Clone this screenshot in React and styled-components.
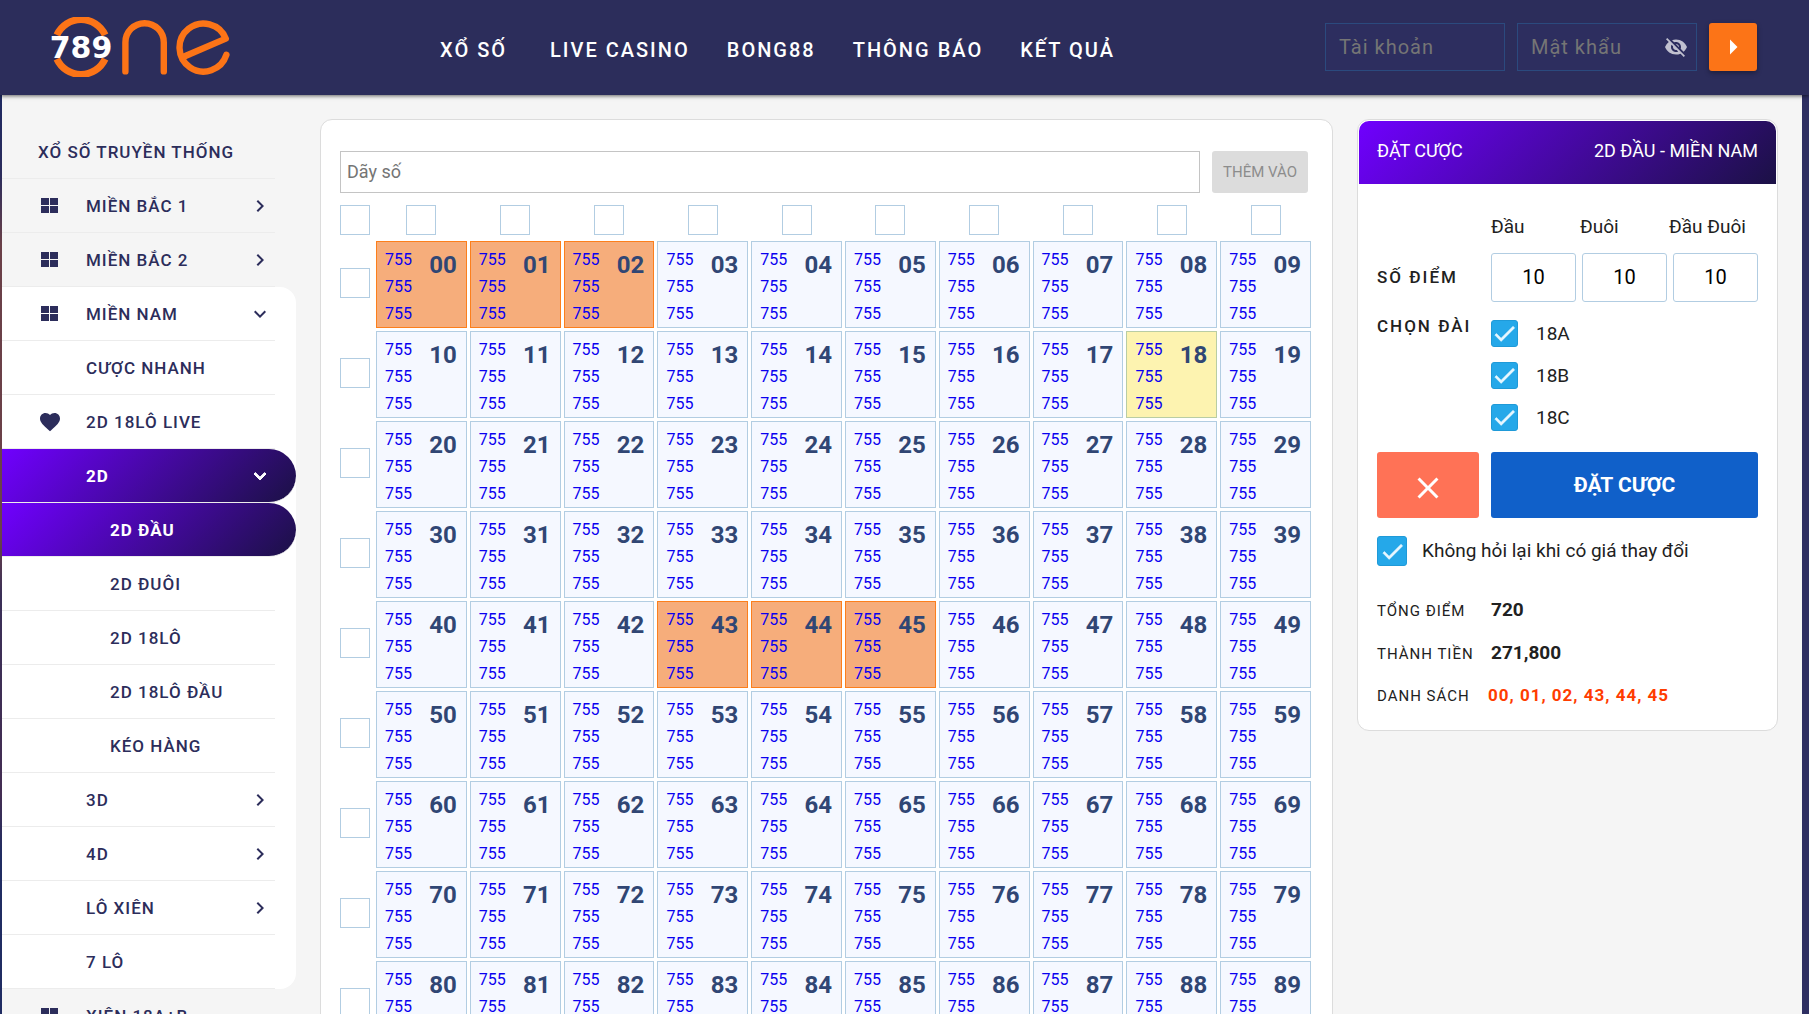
import React, { useState } from "react";
import styled, { createGlobalStyle, css } from "styled-components";
import {
  MdVisibilityOff,
  MdArrowRight,
  MdChevronRight,
  MdKeyboardArrowDown,
  MdFavorite,
  MdCheck,
  MdClose,
} from "react-icons/md";

const GlobalStyle = createGlobalStyle`
  *, *::before, *::after { box-sizing: border-box; }
  body {
    margin: 0;
    background: #2c2d5b;
    font-family: Roboto, "Liberation Sans", sans-serif;
    color: #212121;
  }
  button, input { font-family: inherit; }
`;

const colors = {
  navy: "#2c2d5b",
  orange: "#fc7417",
  line: "#b2cde2",
  edge: "#dcdcdc",
  check: "#25a8e9",
};

const accentGradient = "linear-gradient(135deg, #7000ff 0%, #1b1145 100%)";

const Page = styled.div`
  display: flex;
  flex-direction: column;
  height: 100vh;
  overflow: hidden;
`;

/* ---------- header ---------- */

const Header = styled.header`
  position: relative;
  z-index: 1;
  display: flex;
  align-items: center;
  flex: none;
  height: 95px;
  padding: 0 52px 1px 47px;
  background: ${colors.navy};
  box-shadow: 0 1px 4px rgba(0, 0, 0, 0.6);
`;

const LogoLink = styled.a`
  display: block;
  height: 60px;
`;

const Nav = styled.nav`
  display: flex;
  gap: 37px;
  margin-left: 209px;
  padding-top: 5px;
`;

const NavLink = styled.a`
  padding-right: ${(p) => (p.$wide ? 6 : 0)}px;
  color: #fff;
  font-size: 20px;
  font-weight: 500;
  line-height: 24px;
  letter-spacing: 2px;
  text-decoration: none;
  white-space: nowrap;
`;

const Login = styled.form`
  display: flex;
  gap: 12px;
  margin-left: auto;
`;

const LoginField = styled.div`
  display: flex;
  align-items: center;
  width: 180px;
  height: 48px;
  padding: 0 8px 0 13px;
  border: 1px solid #2b4a7e;
  background: #2d2e5f;
`;

const LoginInput = styled.input`
  flex: 1;
  min-width: 0;
  padding: 0;
  border: 0;
  outline: 0;
  background: none;
  color: #fff;
  font-size: 20px;
  letter-spacing: 1px;
  &::placeholder { color: #757575; opacity: 1; }
`;

const EyeButton = styled.button`
  display: flex;
  padding: 0;
  border: 0;
  background: none;
  color: #c1c1d0;
  font-size: 24px;
`;

const LoginButton = styled.button`
  display: flex;
  align-items: center;
  justify-content: center;
  width: 48px;
  height: 48px;
  padding: 0;
  border: 0;
  border-radius: 3px;
  background: ${colors.orange};
  color: #fff;
  font-size: 36px;
  box-shadow: 0 2px 5px rgba(0, 0, 0, 0.35);
`;

/* ---------- body layout ---------- */

const Backdrop = styled.div`
  flex: 1;
  min-height: 0;
  padding: 0 7px 0 2px;
  background:
    linear-gradient(#1f2a62 0, #2b2c5c 80px, #6a4048 150px, #6b4149 440px, #3a2f57 500px, #432d52 700px, #202c62 760px)
      left / 2px 100% no-repeat,
    #2e2f62;
`;

const Body = styled.main`
  display: grid;
  grid-template-columns: 294px minmax(0, 1fr) 421px;
  column-gap: 24px;
  align-items: start;
  min-height: 100%;
  padding-right: 24px;
  background: #f5f5f5;
`;

/* ---------- side menu ---------- */

const Side = styled.nav`
  padding-top: 30px;
`;

const SideGroup = styled.div`
  border-radius: 0 16px 16px 0;
  background: ${(p) => (p.$open ? "#fff" : "none")};
`;

const SideRow = styled.a`
  display: flex;
  align-items: center;
  height: 54px;
  margin-right: 21px;
  padding: 1px 3px 0 ${(p) => p.$indent}px;
  border-bottom: 1px solid #ececec;
  color: ${colors.navy};
  font-size: 17px;
  font-weight: 500;
  letter-spacing: 1px;
  line-height: 20px;
  text-decoration: none;
  white-space: nowrap;
  ${(p) =>
    p.$active &&
    css`
      margin-right: 0;
      padding-right: 24px;
      border-radius: 0 27px 27px 0;
      background: ${accentGradient};
      color: #fff;
      font-weight: 700;
    `}
`;

const RowIcon = styled.span`
  display: flex;
  width: 48px;
  font-size: 24px;
`;

const RowLabel = styled.span`
  flex: 1;
`;

const RowChevron = styled.span`
  display: flex;
  font-size: 24px;
  path:not([fill="none"]) {
    stroke: currentColor;
    stroke-width: ${(p) => (p.$bold ? 1 : 0)};
  }
`;

/* ---------- number board ---------- */

const Card = styled.section`
  margin-top: 24px;
  border: 1px solid ${colors.edge};
  border-radius: 12px;
  background: #fff;
`;

const Board = styled(Card)`
  padding: 31px 21px 24px 19px;
`;

const AddBar = styled.form`
  display: flex;
  gap: 12px;
  padding-right: 3px;
`;

const SeriesInput = styled.input`
  flex: 1;
  min-width: 0;
  height: 42px;
  padding: 0 6px 2px;
  border: 1px solid #c4c4c4;
  outline: 0;
  color: #212121;
  font-size: 18px;
  &::placeholder { color: #757575; opacity: 1; }
`;

const AddButton = styled.button`
  width: 96px;
  height: 42px;
  padding: 0;
  border: 0;
  border-radius: 3px;
  background: #dcdcdc;
  color: #8c8c8c;
  font-size: 15px;
  white-space: nowrap;
`;

const BoardGrid = styled.div`
  display: grid;
  grid-template-columns: 30px minmax(0, 1fr);
  column-gap: 6px;
  row-gap: 3px;
  margin-top: 12px;
`;

const PickHead = styled.div`
  display: grid;
  grid-template-columns: repeat(10, minmax(0, 1fr));
  column-gap: 3px;
  justify-items: center;
  height: 33px;
`;

const PickBox = styled.input`
  appearance: none;
  display: block;
  width: 30px;
  height: 30px;
  margin: 0;
  border: 1px solid ${colors.line};
  background: #fff;
`;

const PickRow = styled.div`
  padding-top: ${(p) => (p.$head ? 0 : 27)}px;
`;

const NumberRow = styled.div`
  display: grid;
  grid-template-columns: repeat(10, minmax(0, 1fr));
  column-gap: 3px;
`;

const tones = {
  plain: css`
    border-color: ${colors.line};
    background: #f5f8ff;
  `,
  picked: css`
    border-color: #fc7f1c;
    background: #f6ad7b;
  `,
  hover: css`
    border-color: #b9cda4;
    background: #fdf3b0;
  `,
};

const NumberCell = styled.button`
  display: flex;
  align-items: flex-start;
  justify-content: space-between;
  height: 87px;
  padding: 8px 9px 2px 8px;
  border: 1px solid;
  ${(p) => tones[p.$tone]}
`;

const Odds = styled.span`
  display: flex;
  flex-direction: column;
  justify-content: space-between;
  height: 74px;
  color: #0a00f0;
  font-size: 16px;
  line-height: 20px;
`;

const NumberLabel = styled.span`
  padding-top: 1px;
  color: #304674;
  font-size: 24px;
  font-weight: 700;
  line-height: 28px;
`;

/* ---------- bet slip ---------- */

const Slip = styled(Card)`
  padding: 1px;
`;

const SlipHead = styled.h2`
  display: flex;
  align-items: center;
  justify-content: space-between;
  height: 63px;
  margin: 0;
  padding: 0 18px 4px;
  border-radius: 10px 10px 0 0;
  background: ${accentGradient};
  color: #fff;
  font-size: 18px;
  font-weight: 400;
`;

const SlipBody = styled.form`
  display: grid;
  grid-template-columns: 102px minmax(0, 1fr);
  column-gap: 12px;
  padding: 31px 18px 12px;
`;

const PointHeads = styled.div`
  display: grid;
  grid-column: 2;
  grid-template-columns: repeat(3, minmax(0, 1fr));
  font-size: 19px;
  line-height: 24px;
  white-space: nowrap;
`;

const SlipLabel = styled.span`
  padding-top: ${(p) => p.$top}px;
  font-size: 17px;
  font-weight: 500;
  letter-spacing: 2px;
  line-height: 24px;
  white-space: nowrap;
`;

const PointInputs = styled.div`
  display: grid;
  grid-template-columns: repeat(3, minmax(0, 1fr));
  column-gap: 6px;
  padding-top: 14px;
`;

const PointInput = styled.input`
  width: 100%;
  height: 49px;
  padding: 0 0 2px;
  border: 1px solid ${colors.line};
  border-radius: 3px;
  outline: 0;
  color: #000;
  font-size: 20px;
  text-align: center;
`;

const Stations = styled.div`
  display: flex;
  flex-direction: column;
  gap: 15px;
  padding-top: 18px;
`;

const CheckLabel = styled.label`
  display: flex;
  align-items: center;
  gap: ${(p) => (p.$large ? 15 : 18)}px;
  grid-column: 1 / -1;
  margin-top: ${(p) => (p.$large ? 18 : 0)}px;
  font-size: 19px;
  line-height: ${(p) => (p.$large ? 30 : 27)}px;
`;

const CheckFrame = styled.span`
  display: grid;
  flex: none;
  width: ${(p) => (p.$large ? 30 : 27)}px;
  height: ${(p) => (p.$large ? 30 : 27)}px;
  color: #e8f7ff;
  font-size: 27px;
  > * { grid-area: 1 / 1; place-self: center; }
  > svg { pointer-events: none; }
  path:not([fill="none"]) {
    stroke: currentColor;
    stroke-width: 0.5;
  }
`;

const CheckInput = styled.input`
  appearance: none;
  width: 100%;
  height: 100%;
  margin: 0;
  border: 1px solid #1f9ad8;
  border-radius: 3px;
  background: ${colors.check};
`;

const SlipButton = styled.button`
  display: flex;
  align-items: center;
  justify-content: center;
  height: 66px;
  margin-top: 21px;
  padding: ${(p) => (p.$danger ? "6px 0 0" : "0")};
  border: 0;
  border-radius: 3px;
  background: ${(p) => (p.$danger ? "#ff7256" : "#1060c9")};
  color: #fff;
  font-size: ${(p) => (p.$danger ? 36 : 21)}px;
  font-weight: 700;
`;

const Totals = styled.dl`
  display: grid;
  grid-column: 1 / -1;
  grid-template-columns: max-content minmax(0, 1fr);
  margin: 23px 0 0;
`;

const TotalRow = styled.div`
  display: flex;
  align-items: baseline;
  grid-column: 1 / -1;
  line-height: 41px;
`;

const TotalName = styled.dt`
  width: ${(p) => (p.$list ? 111 : 114)}px;
  font-size: 15px;
  letter-spacing: 1px;
  white-space: nowrap;
`;

const TotalValue = styled.dd`
  margin: 0;
  color: ${(p) => (p.$list ? "#ff3c00" : "#212121")};
  font-size: ${(p) => (p.$list ? 17 : 19)}px;
  font-weight: 700;
  letter-spacing: ${(p) => (p.$list ? 1 : 0)}px;
`;

/* ---------- drawings ---------- */

function Logo() {
  return (
    <svg width="184" height="60" viewBox="47 17 184 60" role="img" aria-label="789 One">
      <g fill="none" stroke={colors.orange}>
        <path d="M56.9 35 A26.5 26.5 0 0 1 105.1 35 M56.9 59 A26.5 26.5 0 0 0 105.1 59" strokeWidth="7" />
        <path d="M125.4 71.4 V42.4 A19.2 19.2 0 0 1 163.8 42.4 V71.4" strokeWidth="6.4" strokeLinecap="round" />
        <path
          d="M226.4 54.8 A24 24 0 1 1 225.8 38.6 L183 57"
          strokeWidth="6.4"
          strokeLinecap="round"
          strokeLinejoin="round"
        />
      </g>
      <text x="81" y="58" textAnchor="middle" fill="#fff" fontFamily="'DejaVu Sans', sans-serif" fontWeight="700" fontSize="30">
        789
      </text>
    </svg>
  );
}

function TilesIcon() {
  return (
    <svg width="24" height="24" viewBox="0 0 24 24" fill="currentColor" aria-hidden="true">
      <path d="M3 4h8v7H3zM12 4h8v7h-8zM3 12h8v7H3zM12 12h8v7h-8z" />
    </svg>
  );
}

/* ---------- data ---------- */

const navItems = ["XỔ SỐ", "LIVE CASINO", "BONG88", "THÔNG BÁO", "KẾT QUẢ"];

const menu = [
  { rows: [{ label: "XỔ SỐ TRUYỀN THỐNG", indent: 36 }] },
  { rows: [{ label: "MIỀN BẮC 1", icon: "tiles", chevron: "right" }] },
  { rows: [{ label: "MIỀN BẮC 2", icon: "tiles", chevron: "right" }] },
  {
    open: true,
    rows: [
      { label: "MIỀN NAM", icon: "tiles", chevron: "down" },
      { label: "CƯỢC NHANH", indent: 84 },
      { label: "2D 18LÔ LIVE", icon: "heart" },
      { label: "2D", indent: 84, chevron: "down", active: true },
      { label: "2D ĐẦU", indent: 108, active: true },
      { label: "2D ĐUÔI", indent: 108 },
      { label: "2D 18LÔ", indent: 108 },
      { label: "2D 18LÔ ĐẦU", indent: 108 },
      { label: "KÉO HÀNG", indent: 108 },
      { label: "3D", indent: 84, chevron: "right" },
      { label: "4D", indent: 84, chevron: "right" },
      { label: "LÔ XIÊN", indent: 84, chevron: "right" },
      { label: "7 LÔ", indent: 84 },
    ],
  },
  { rows: [{ label: "XIÊN 18A+B", icon: "tiles" }] },
];

const digits = Array.from({ length: 10 }, (_, i) => i);
const initialPicks = ["00", "01", "02", "43", "44", "45"];
const highlighted = "18";

/* ---------- parts ---------- */

function MenuRow({ row }) {
  const Chevron = row.chevron === "down" ? MdKeyboardArrowDown : MdChevronRight;
  return (
    <SideRow href="#" $indent={row.icon ? 36 : row.indent} $active={row.active}>
      {row.icon && <RowIcon>{row.icon === "heart" ? <MdFavorite /> : <TilesIcon />}</RowIcon>}
      <RowLabel>{row.label}</RowLabel>
      {row.chevron && (
        <RowChevron $bold={row.active}>
          <Chevron />
        </RowChevron>
      )}
    </SideRow>
  );
}

function Check({ large, children }) {
  return (
    <CheckLabel $large={large}>
      <CheckFrame $large={large}>
        <CheckInput type="checkbox" defaultChecked />
        <MdCheck />
      </CheckFrame>
      {children}
    </CheckLabel>
  );
}

function NumberBoard({ picks, onToggle }) {
  const toneOf = (n) => (picks.includes(n) ? "picked" : n === highlighted ? "hover" : "plain");
  return (
    <Board>
      <AddBar onSubmit={(e) => e.preventDefault()}>
        <SeriesInput placeholder="Dãy số" aria-label="Dãy số" />
        <AddButton disabled>THÊM VÀO</AddButton>
      </AddBar>
      <BoardGrid>
        <PickRow $head>
          <PickBox type="checkbox" aria-label="00 - 99" />
        </PickRow>
        <PickHead>
          {digits.map((d) => (
            <PickBox key={d} type="checkbox" aria-label={`0${d} - 9${d}`} />
          ))}
        </PickHead>
        {digits.map((r) => (
          <React.Fragment key={r}>
            <PickRow>
              <PickBox type="checkbox" aria-label={`${r}0 - ${r}9`} />
            </PickRow>
            <NumberRow>
              {digits.map((c) => {
                const n = `${r}${c}`;
                return (
                  <NumberCell key={n} type="button" $tone={toneOf(n)} onClick={() => onToggle(n)}>
                    <Odds>
                      <span>755</span>
                      <span>755</span>
                      <span>755</span>
                    </Odds>
                    <NumberLabel>{n}</NumberLabel>
                  </NumberCell>
                );
              })}
            </NumberRow>
          </React.Fragment>
        ))}
      </BoardGrid>
    </Board>
  );
}

function BetSlip({ picks, onClear }) {
  return (
    <Slip>
      <SlipHead>
        <span>ĐẶT CƯỢC</span>
        <span>2D ĐẦU - MIỀN NAM</span>
      </SlipHead>
      <SlipBody onSubmit={(e) => e.preventDefault()}>
        <PointHeads>
          <label htmlFor="points-head">Đầu</label>
          <label htmlFor="points-tail">Đuôi</label>
          <label htmlFor="points-both">Đầu Đuôi</label>
        </PointHeads>
        <SlipLabel $top={26}>SỐ ĐIỂM</SlipLabel>
        <PointInputs>
          <PointInput id="points-head" defaultValue="10" />
          <PointInput id="points-tail" defaultValue="10" />
          <PointInput id="points-both" defaultValue="10" />
        </PointInputs>
        <SlipLabel $top={12}>CHỌN ĐÀI</SlipLabel>
        <Stations>
          <Check>18A</Check>
          <Check>18B</Check>
          <Check>18C</Check>
        </Stations>
        <SlipButton type="button" $danger aria-label="Xóa" onClick={onClear}>
          <MdClose />
        </SlipButton>
        <SlipButton>ĐẶT CƯỢC</SlipButton>
        <Check large>Không hỏi lại khi có giá thay đổi</Check>
        <Totals>
          <TotalRow>
            <TotalName>TỔNG ĐIỂM</TotalName>
            <TotalValue>720</TotalValue>
          </TotalRow>
          <TotalRow>
            <TotalName>THÀNH TIỀN</TotalName>
            <TotalValue>271,800</TotalValue>
          </TotalRow>
          <TotalRow>
            <TotalName $list>DANH SÁCH</TotalName>
            <TotalValue $list>{picks.join(", ")}</TotalValue>
          </TotalRow>
        </Totals>
      </SlipBody>
    </Slip>
  );
}

export default function App() {
  const [picks, setPicks] = useState(initialPicks);
  const toggle = (n) =>
    setPicks((list) => (list.includes(n) ? list.filter((x) => x !== n) : [...list, n].sort()));

  return (
    <Page>
      <GlobalStyle />
      <Header>
        <LogoLink href="#">
          <Logo />
        </LogoLink>
        <Nav>
          {navItems.map((item, i) => (
            <NavLink key={item} href="#" $wide={i === 0}>
              {item}
            </NavLink>
          ))}
        </Nav>
        <Login onSubmit={(e) => e.preventDefault()}>
          <LoginField>
            <LoginInput placeholder="Tài khoản" aria-label="Tài khoản" />
          </LoginField>
          <LoginField>
            <LoginInput type="password" placeholder="Mật khẩu" aria-label="Mật khẩu" />
            <EyeButton type="button" aria-label="Hiện mật khẩu">
              <MdVisibilityOff />
            </EyeButton>
          </LoginField>
          <LoginButton aria-label="Đăng nhập">
            <MdArrowRight />
          </LoginButton>
        </Login>
      </Header>
      <Backdrop>
        <Body>
          <Side>
            {menu.map((group) => (
              <SideGroup key={group.rows[0].label} $open={group.open}>
                {group.rows.map((row) => (
                  <MenuRow key={row.label} row={row} />
                ))}
              </SideGroup>
            ))}
          </Side>
          <NumberBoard picks={picks} onToggle={toggle} />
          <BetSlip picks={picks} onClear={() => setPicks([])} />
        </Body>
      </Backdrop>
    </Page>
  );
}
